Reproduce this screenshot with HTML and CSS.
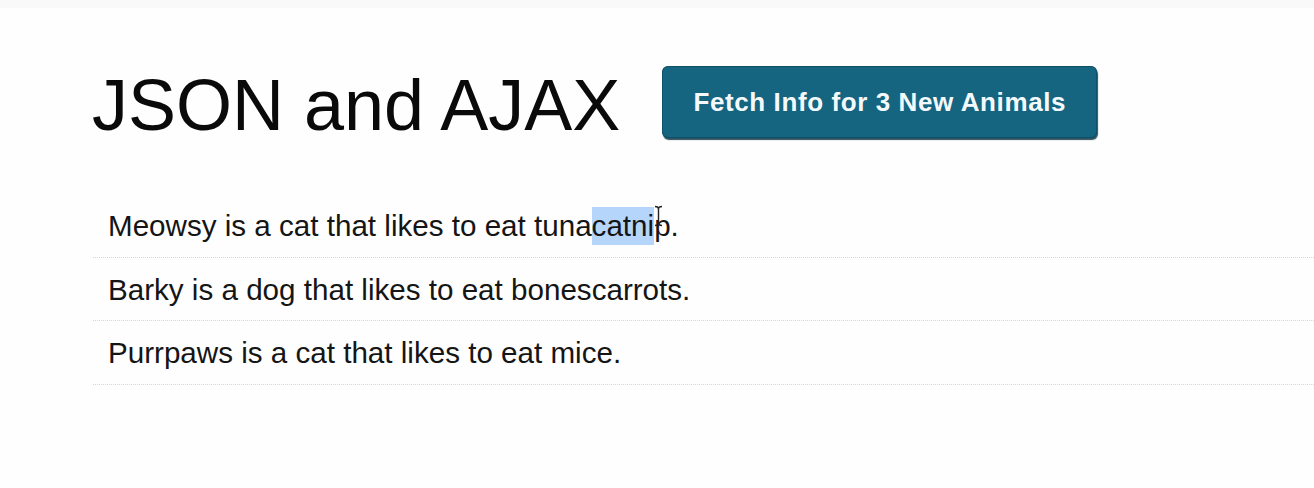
FILE: index.html
```html
<!DOCTYPE html>
<html>
<head>
<meta charset="utf-8">
<link rel="stylesheet" href="styles.css">
</head>
<body>
<div class="topbar"></div>
<main class="page">
  <header class="header">
    <h1 class="title">JSON and AJAX</h1>
    <button class="fetch-btn">Fetch Info for 3 New Animals</button>
  </header>
  <ul class="animals">
    <li class="animal">Meowsy is a cat that likes to eat tuna<span class="sel">catni</span><span class="caret-wrap">p<svg class="ibeam" width="9" height="22" viewBox="0 0 9 22"><path d="M1 1.5 Q4.5 1.5 4.5 4 Q4.5 1.5 8 1.5 M4.5 4 V18 M1 20.5 Q4.5 20.5 4.5 18 Q4.5 20.5 8 20.5" fill="none" stroke="#222" stroke-width="1.4"/></svg></span>.</li>
    <li class="animal">Barky is a dog that likes to eat bonescarrots.</li>
    <li class="animal">Purrpaws is a cat that likes to eat mice.</li>
  </ul>
</main>
</body>
</html>
```
FILE: styles.css
```css
html, body {
  margin: 0;
  padding: 0;
  background: #fefefe;
}
body {
  font-family: "Liberation Sans", Arial, sans-serif;
  color: #151515;
  overflow: hidden;
}
.topbar {
  height: 8px;
  background: #f9f9f9;
}
.page {
  padding-left: 92px;
}
.header {
  display: flex;
  align-items: flex-start;
  gap: 42px;
  padding-top: 58px;
}
.title {
  margin: 3px 0 0 0;
  font-size: 72px;
  line-height: 72px;
  font-weight: normal;
  color: #0a0a0a;
}
.fetch-btn {
  width: 435px;
  height: 72px;
  padding: 0;
  border: none;
  border-radius: 6px;
  background: #156480;
  box-shadow: 1px 2px 1px rgba(8, 50, 66, 0.85), inset 0 0 0 1px rgba(10, 70, 90, 0.6);
  color: #f4fafc;
  font-family: "Liberation Sans", Arial, sans-serif;
  font-weight: bold;
  font-size: 26px;
  letter-spacing: 0.6px;
  text-align: center;
  line-height: 72px;
}
.animals {
  list-style: none;
  margin: 53px 0 0 1px;
  padding: 0;
}
.animal {
  font-size: 29.6px;
  line-height: 36px;
  padding: 14px 0 12.5px 15px;
  border-bottom: 1px dotted #d6d6d6;
}
.sel {
  background: #b6d5fb;
  padding: 2px 0 3px 0;
}
.caret-wrap {
  position: relative;
}
.ibeam {
  position: absolute;
  left: 0px;
  top: -4px;
}
```
